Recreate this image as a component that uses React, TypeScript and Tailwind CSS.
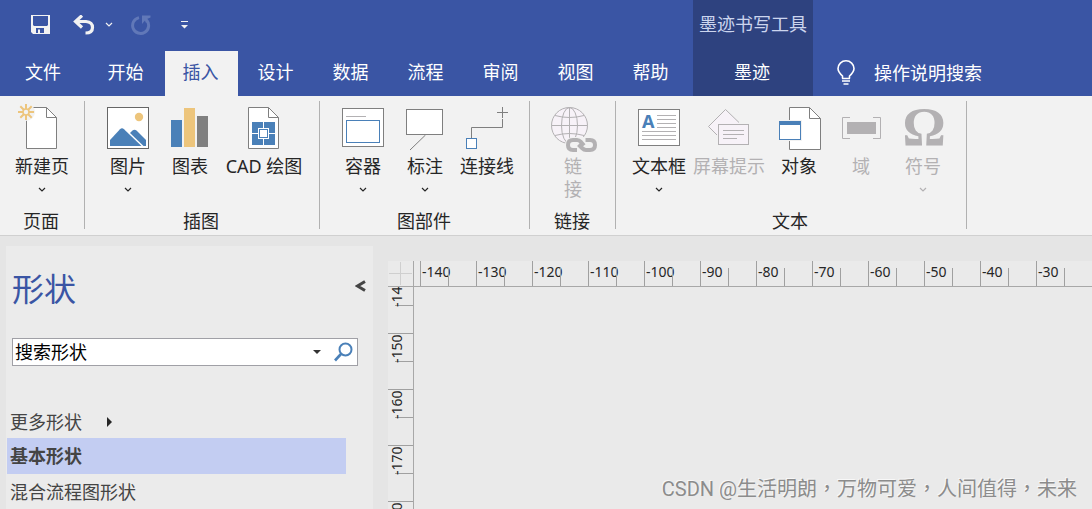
import { useEffect, useState } from 'react';
import type { ReactNode } from 'react';
import { clsx } from 'clsx';

interface RibbonItem {
  id: string;
  label: ReactNode;
  icon: ReactNode;
  width?: string;
  menu?: boolean;
  disabled?: boolean;
}

interface RibbonGroup {
  name: string;
  padding: string;
  items: RibbonItem[];
}

const BLUE = '#4a80b8';
const SAND = '#edc57c';
const LINE = '#7f7f7f';
const FAINT = '#b3b1b3';
const TINT = '#f7f2f8';

const tabs = ['开始', '插入', '设计', '数据', '流程', '审阅', '视图', '帮助'];

// One ruler mark every 56px, as many as the window has room for
const MARK_SIZE = 56;
const RULER_LEFT = 420;
const RULER_TOP = 277;

function countMarks() {
  return {
    across: Math.max(0, Math.ceil((window.innerWidth - RULER_LEFT) / MARK_SIZE)),
    down: Math.max(0, Math.ceil((window.innerHeight - RULER_TOP) / MARK_SIZE)),
  };
}

function useMarkCount() {
  const [count, setCount] = useState(countMarks);

  useEffect(() => {
    const update = () => setCount(countMarks());
    window.addEventListener('resize', update);
    return () => window.removeEventListener('resize', update);
  }, []);

  return count;
}

function Icon({ children }: { children: ReactNode }) {
  return (
    <svg width="48" height="48" viewBox="0 0 48 48" fill="none" className="overflow-visible" aria-hidden="true">
      {children}
    </svg>
  );
}

function Sheet() {
  return (
    <>
      <path d="M8.5 3.5H28.5L38.5 13.5V44.5H8.5Z" fill="#fff" stroke={LINE} />
      <path d="M28.5 3.5V13.5H38.5" stroke={LINE} />
    </>
  );
}

const newPageIcon = (
  <Icon>
    <Sheet />
    <circle cx="8" cy="8" r="9" fill="#f2f2f2" />
    <path
      d="M8 0V5M8 11V16M0 8H5M11 8H16M2.3 2.3L5.8 5.8M10.2 10.2L13.7 13.7M13.7 2.3L10.2 5.8M5.8 10.2L2.3 13.7"
      stroke={SAND}
      strokeWidth="2"
    />
    <circle cx="8" cy="8" r="3" stroke={SAND} strokeWidth="1.5" />
  </Icon>
);

const pictureIcon = (
  <Icon>
    <rect x="3.5" y="3.5" width="41" height="41" fill="#fff" stroke="#666" />
    <circle cx="35" cy="13" r="4.2" fill={SAND} />
    <path d="M6 42V36L16 25.2Q18 23.4 20 25.2L37.5 42Z" fill={BLUE} />
    <path d="M26 29L28.5 26.5Q30.5 24.8 32.5 26.5L42 36V42H39.5Z" fill={BLUE} />
  </Icon>
);

const chartIcon = (
  <Icon>
    <rect x="5" y="16" width="11" height="27" fill={BLUE} />
    <rect x="18" y="4" width="11" height="39" fill={SAND} />
    <rect x="31" y="12" width="11" height="31" fill="#808080" />
  </Icon>
);

const cadIcon = (
  <Icon>
    <Sheet />
    <rect x="12" y="18" width="23" height="23" fill={BLUE} />
    <path d="M23.5 18V41M12 29.5H35" stroke="#fff" />
    <rect x="18" y="24" width="11" height="11" fill="#fff" />
    <rect x="19.5" y="25.5" width="8" height="8" fill="#fff" stroke={BLUE} />
  </Icon>
);

const containerIcon = (
  <Icon>
    <rect x="3.5" y="4.5" width="41" height="38" fill="#fff" stroke={LINE} />
    <path d="M7 12.5H27" stroke={FAINT} />
    <rect x="7.5" y="16.5" width="33" height="22" stroke={BLUE} />
  </Icon>
);

const calloutIcon = (
  <Icon>
    <rect x="5.5" y="5.5" width="36" height="25" fill="#fff" stroke={LINE} />
    <path d="M24.5 31L9 46" stroke={LINE} />
  </Icon>
);

const connectorIcon = (
  <Icon>
    <path d="M8.5 34V23.5H39.5V15M39.5 3V14M34 8.5H45" stroke={LINE} />
    <rect x="3.5" y="34.5" width="10" height="10" fill="#fff" stroke={BLUE} />
  </Icon>
);

const linkIcon = (
  <Icon>
    <circle cx="20.5" cy="21.5" r="18" fill={TINT} stroke={FAINT} />
    <ellipse cx="20.5" cy="21.5" rx="8" ry="18" stroke={FAINT} />
    <path d="M20.5 3.5V39.5M2.5 21.5H38.5M6 11.5Q20.5 15.5 35 11.5M6 31.5Q20.5 27.5 35 31.5" stroke={FAINT} />
    <rect x="16" y="33" width="33" height="16" rx="8" fill="#f2f2f2" />
    <path
      d="M28 46H24Q19 46 19 41Q19 36 24 36H28Q30 36 32 38L35 41.5M36.500 36H41Q46 36 46 41Q46 46 41 46H37Q35 46 33 44L29.500 40.500"
      stroke={FAINT}
      strokeWidth="4"
    />
  </Icon>
);

const textBoxIcon = (
  <Icon>
    <rect x="3.5" y="5.5" width="41" height="36" fill="#fff" stroke={LINE} />
    <text x="7" y="24" fontSize="18" fontWeight="700" fill={BLUE} fontFamily="Noto Sans, sans-serif">
      A
    </text>
    <path
      d="M22 11.5H41M22 15.5H41M22 19.5H41M22 23.5H41M7 27.5H41M7 31.5H41M7 35.5H41"
      stroke={FAINT}
    />
  </Icon>
);

const screenTipIcon = (
  <Icon>
    <path d="M12 31L3.5 22.5L20.5 5.5L34 18.5V31Z" fill={TINT} />
    <path d="M12 31L3.5 22.5L20.5 5.5L34 18.5" stroke={FAINT} />
    <rect x="13.5" y="20.5" width="30" height="20" fill={TINT} stroke={FAINT} />
    <path d="M18 26.5H39M18 30.5H39M18 34.5H32" stroke={FAINT} />
  </Icon>
);

const objectIcon = (
  <Icon>
    <path d="M14.5 3.5H34.5L45.5 14.5V45.5H14.5Z" fill="#fff" stroke={LINE} />
    <path d="M34.5 3.5V14.5H45.5" stroke={LINE} />
    <rect x="3" y="16" width="24" height="21" fill="#f2f2f2" />
    <rect x="4.5" y="17.5" width="21" height="18" fill="#fff" stroke={BLUE} />
    <rect x="4" y="17" width="22" height="4" fill={BLUE} />
  </Icon>
);

const fieldIcon = (
  <Icon>
    <path d="M13 13.5H5.5V34.5H13M36 13.5H43.5V34.5H36" stroke={FAINT} />
    <rect x="10" y="18" width="29" height="12" fill={FAINT} />
  </Icon>
);

const symbolIcon = (
  <Icon>
    <text x="25" y="41" fontSize="54" fontWeight="700" textAnchor="middle" fill={FAINT} fontFamily="Liberation Serif, serif">
      Ω
    </text>
  </Icon>
);

const groups: RibbonGroup[] = [
  {
    name: '页面',
    padding: 'px-[11px]',
    items: [{ id: 'page', label: '新建页', icon: newPageIcon, menu: true }],
  },
  {
    name: '插图',
    padding: 'px-3',
    items: [
      { id: 'picture', label: '图片', icon: pictureIcon, menu: true },
      { id: 'chart', label: '图表', icon: chartIcon },
      { id: 'cad', label: 'CAD 绘图', icon: cadIcon, width: 'w-[86px]' },
    ],
  },
  {
    name: '图部件',
    padding: 'pl-3 pr-[11px]',
    items: [
      { id: 'container', label: '容器', icon: containerIcon, menu: true },
      { id: 'callout', label: '标注', icon: calloutIcon, menu: true },
      { id: 'connector', label: '连接线', icon: connectorIcon },
    ],
  },
  {
    name: '链接',
    padding: 'pl-3 pr-[11px]',
    items: [{ id: 'link', label: <>链<br />接</>, icon: linkIcon, disabled: true }],
  },
  {
    name: '文本',
    padding: 'px-3',
    items: [
      { id: 'textbox', label: '文本框', icon: textBoxIcon, menu: true },
      { id: 'screentip', label: '屏幕提示', icon: screenTipIcon, width: 'w-[78px]', disabled: true },
      { id: 'object', label: '对象', icon: objectIcon },
      { id: 'field', label: '域', icon: fieldIcon, disabled: true },
      { id: 'symbol', label: '符号', icon: symbolIcon, menu: true, disabled: true },
    ],
  },
];

function Chevron() {
  return (
    <svg width="8" height="5" viewBox="0 0 8 5" fill="none" aria-hidden="true">
      <path d="M1 1L4 4L7 1" stroke="currentColor" strokeWidth="1.2" />
    </svg>
  );
}

function QuickAccess() {
  return (
    <div className="flex h-[51px] items-center pb-[2px] pl-[31px] text-[#f2f2f2]">
      <button aria-label="保存">
        <svg width="19" height="19" viewBox="0 0 19 19" fill="none">
          <path d="M0 0H19V19H2L0 17Z" fill="currentColor" />
          <path d="M2 1H17V10L16 11H3L2 10Z" fill="#3a55a4" />
          <path d="M5 13H13V18H9V14.5H7V18H5Z" fill="#3a55a4" />
        </svg>
      </button>
      <button aria-label="撤消" className="ml-[23px]">
        <svg width="22" height="20" viewBox="0 0 22 20" fill="none">
          <path d="M2.5 6.5H13Q19.500 7 19.500 12.500Q19.500 18 12.500 18" stroke="currentColor" strokeWidth="3.2" />
          <path d="M9 0.500L2.500 6.500L9 12.500" stroke="currentColor" strokeWidth="3.2" />
        </svg>
      </button>
      <button aria-label="撤消选项" className="ml-[10px]">
        <Chevron />
      </button>
      <button aria-label="恢复" disabled className="ml-[18px] text-[#6178b8]">
        <svg width="20" height="20" viewBox="0 0 20 20" fill="none">
          <path d="M8 2.600A8 8 0 1 0 15.500 5" stroke="currentColor" strokeWidth="3" />
          <path d="M11 0.500H19.500V2.500L16 4L17.500 6L15 8L14 5.500L11 9Z" fill="currentColor" />
        </svg>
      </button>
      <button aria-label="自定义快速访问工具栏" className="ml-[30px]">
        <svg width="7" height="8" viewBox="0 0 7 8">
          <path d="M0 0H7V1H0ZM0 4H7L3.5 7.5Z" fill="currentColor" />
        </svg>
      </button>
    </div>
  );
}

function Header() {
  return (
    <header className="flex h-24 shrink-0 bg-[#3a55a4] text-lg leading-6 text-white">
      <div className="pr-[5px]">
        <QuickAccess />
        <nav className="flex h-[45px] gap-[2px]">
          <button className="w-[88px] pr-[2px] pb-[3px]">文件</button>
          {tabs.map((tab) => (
            <button
              key={tab}
              className={clsx('w-[73px] pr-[2px] pb-[3px]', tab === '插入' && 'bg-[#f2f2f2] text-[#3a55a4]')}
            >
              {tab}
            </button>
          ))}
        </nav>
      </div>
      <div className="flex w-[120px] flex-col bg-[#2e427f] text-center">
        <span className="h-[51px] pt-3 text-[#ccd5ee]">墨迹书写工具</span>
        <button className="h-[45px] pr-[2px] pb-[3px]">墨迹</button>
      </div>
      <button className="flex h-[45px] items-center gap-[19px] self-end pb-[2px] pl-6">
        <svg width="18" height="25" viewBox="0 0 18 25" fill="none" aria-hidden="true">
          <path
            d="M5.5 18.5V16Q1 12 1 8.5A8 7.7 0 0 1 17 8.5Q17 12 12.5 16V18.5"
            stroke="currentColor"
            strokeWidth="1.6"
          />
          <path d="M5 18.5H13M5 21H13M6.5 24H11.5" stroke="currentColor" strokeWidth="1.5" />
        </svg>
        操作说明搜索
      </button>
    </header>
  );
}

function RibbonButton({ item }: { item: RibbonItem }) {
  return (
    <button
      disabled={item.disabled}
      className={clsx(
        'flex flex-col items-center whitespace-nowrap leading-[23px]',
        item.width ?? 'w-[62px]',
        item.disabled ? 'text-[#b3b1b3]' : 'text-[#262626]',
      )}
    >
      {item.icon}
      <span className="mt-[3px]">{item.label}</span>
      {item.menu && (
        <span className="flex h-[23px] items-center">
          <Chevron />
        </span>
      )}
    </button>
  );
}

function Ribbon() {
  return (
    <div className="flex shrink-0 border-b border-[#d0d0d0] bg-[#f2f2f2] pt-[5px] pb-[6px] text-lg">
      {groups.map((group) => (
        <section
          key={group.name}
          className={clsx('flex h-32 flex-col justify-between border-r border-[#b1b1b1] pt-[3px]', group.padding)}
        >
          <div className="flex items-start">
            {group.items.map((item) => (
              <RibbonButton key={item.id} item={item} />
            ))}
          </div>
          <h2 className="pr-[2px] text-center leading-4 text-[#262626]">{group.name}</h2>
        </section>
      ))}
    </div>
  );
}

function ShapesPanel() {
  return (
    <aside className="w-[367px] shrink-0 bg-[#ebebeb] pt-5 text-lg leading-6 text-[#444]">
      <div className="flex items-center justify-between pr-[7px] pl-[6px]">
        <h1 className="text-[32px] leading-[46px] text-[#3a55a4]">形状</h1>
        <button aria-label="折叠" className="pb-[6px]">
          <svg width="11" height="12" viewBox="0 0 11 12" fill="none">
            <path d="M10 1.5L2.5 6L10 10.5" stroke="currentColor" strokeWidth="3" />
          </svg>
        </button>
      </div>
      <div className="mt-[26px] mr-[15px] ml-[6px] flex h-7 items-center border border-[#a0a0a6] bg-white pr-1">
        <input
          aria-label="搜索形状"
          defaultValue="搜索形状"
          className="min-w-0 flex-1 pl-[2px] text-black outline-none"
        />
        <button aria-label="搜索选项">
          <svg width="8" height="4" viewBox="0 0 8 4">
            <path d="M0 0H8L4 4Z" fill="#333" />
          </svg>
        </button>
        <button aria-label="搜索" className="ml-[13px]">
          <svg width="19" height="20" viewBox="0 0 19 20" fill="none">
            <circle cx="11.5" cy="7.5" r="6" stroke={BLUE} strokeWidth="2" />
            <path d="M7 12L1 18.5" stroke={BLUE} strokeWidth="2.6" />
          </svg>
        </button>
      </div>
      <ul className="mt-10 mr-[27px] ml-px">
        <li>
          <button className="flex h-8 w-full items-center gap-[25px] pl-[3px]">
            更多形状
            <svg width="5" height="10" viewBox="0 0 5 10" aria-hidden="true">
              <path d="M0 0L5 5L0 10Z" fill="#262626" />
            </svg>
          </button>
        </li>
        <li>
          <button className="h-9 w-full bg-[#c3cdf2] pl-[3px] text-left font-bold">基本形状</button>
        </li>
        <li>
          <button className="h-9 w-full pl-[3px] text-left">混合流程图形状</button>
        </li>
      </ul>
    </aside>
  );
}

function DrawingArea() {
  const { across, down } = useMarkCount();
  const horizontalMarks = Array.from({ length: across }, (_, i) => -140 + i * 10);
  const verticalMarks = Array.from({ length: down }, (_, i) => -140 - i * 10);

  return (
    <main className="mt-[15px] ml-[15px] flex min-w-0 flex-1 flex-col bg-[#eaeaea] text-sm text-[#262626]">
      <div className="flex h-[26px] shrink-0 border-b border-[#a8a8a8]">
        <div className="flex w-[26px] shrink-0 items-center justify-center border-r border-[#a8a8a8]">
          <svg width="23" height="23" viewBox="0 0 23 23" aria-hidden="true">
            <path d="M11.5 0V23M0 11.5H23" stroke="#cfcfcf" />
          </svg>
        </div>
        <div className="flex min-w-0 flex-1 overflow-hidden pl-[6px]">
          {horizontalMarks.map((mark) => (
            <div key={mark} className="flex w-14 shrink-0">
              <span className="w-7 border-l border-[#a0a0a0] pl-px leading-[22px] whitespace-nowrap">{mark}</span>
              <span className="h-[18px] w-7 self-end border-l border-[#a0a0a0]" />
            </div>
          ))}
        </div>
      </div>
      <div className="flex min-h-0 flex-1">
        <div className="w-[26px] shrink-0 overflow-hidden border-r border-[#a8a8a8]">
          <div className="-mt-[10px] flex flex-col">
            {verticalMarks.map((mark) => (
              <div key={mark} className="flex h-14 shrink-0 flex-col">
                <div className="flex h-7 border-t border-[#a0a0a0]">
                  <span className="h-[30px] shrink-0 rotate-180 text-right leading-[18px] whitespace-nowrap [writing-mode:vertical-rl]">
                    {mark}
                  </span>
                </div>
                <span className="h-7 w-[18px] self-end border-t border-[#a0a0a0]" />
              </div>
            ))}
          </div>
        </div>
      </div>
    </main>
  );
}

export default function App() {
  return (
    <div className="relative flex h-screen flex-col overflow-hidden bg-[#e5e5e5] font-['Noto_Sans','Noto_Sans_CJK_SC',sans-serif]">
      <Header />
      <Ribbon />
      <div className="flex min-h-0 flex-1 overflow-hidden pt-[10px] pl-[6px]">
        <ShapesPanel />
        <DrawingArea />
      </div>
      <p className="absolute right-[15px] bottom-[6px] font-['Roboto','Noto_Sans_CJK_TC',sans-serif] text-xl leading-7 text-[#8c8c8c] [text-shadow:-1px_-1px_0_#f8f8f8]">
        CSDN @生活明朗，万物可爱，人间值得，未来
      </p>
    </div>
  );
}
